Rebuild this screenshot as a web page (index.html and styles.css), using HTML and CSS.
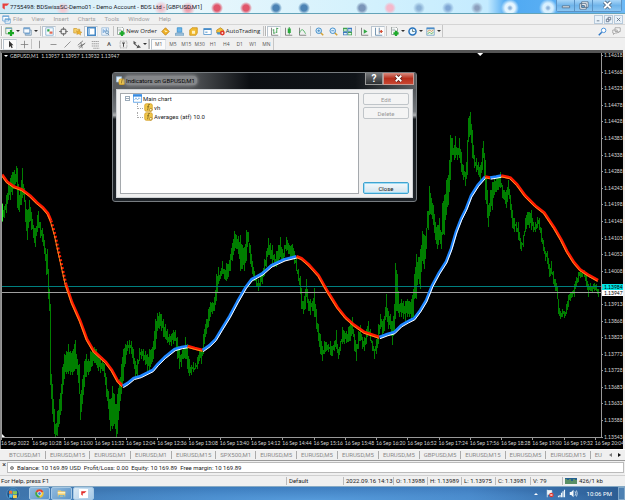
FILE: index.html
```html
<!DOCTYPE html>
<html lang="en">
<head>
<meta charset="utf-8">
<title>7755498: BDSwissSC-Demo01 - Demo Account - BDS Ltd - [GBPUSD,M1]</title>
<link rel="stylesheet" href="styles.css">
</head>
<body>
<svg class="defs" aria-hidden="true">
  <symbol id="i-logo" viewBox="0 0 12 12"><path d="M2 2h9L8 5H5v5L2 8z" fill="#e8413c"/></symbol>
  <symbol id="i-mdi" viewBox="0 0 12 12"><path d="M1 1h8v7H1zM4 5h7v6H4z" fill="#fff" stroke="#5c9cd0"/><path d="M1 2h8M4 6h7" stroke="#5c9cd0"/></symbol>
  <symbol id="i-new" viewBox="0 0 12 12"><path d="M1 1h8v8H1z" fill="#eef4ee" stroke="#689b70"/><path d="M1 2h8" stroke="#5d93c8"/><path d="M8 4v8M4 8h8" stroke="#18a522" stroke-width="3"/></symbol>
  <symbol id="i-prof" viewBox="0 0 12 12"><path d="M3 4h8v7H3z" fill="#dfe9f2" stroke="#708ca6"/><path d="M1 1h8v7H1z" fill="#f5faff" stroke="#5b8bb9"/><path d="M1 2h8M3 9h6" stroke="#74a4d0" stroke-width="2"/></symbol>
  <symbol id="i-market" viewBox="0 0 12 12"><path d="M1 1h10v10H1z" fill="#f4faff" stroke="#79a7ca"/><path d="M3 3h3v3H3z" fill="#29a545"/><path d="M6 6h4v3H6z" fill="#e56b55"/></symbol>
  <symbol id="i-target" viewBox="0 0 12 12"><circle cx="6" cy="6" r="3.5" fill="none" stroke="#777" stroke-width="1.5"/><path d="M6 0v4M6 8v4M0 6h4M8 6h4" stroke="#666"/></symbol>
  <symbol id="i-nav" viewBox="0 0 12 12"><path d="M1 2h4l1 1h3v5H1z" fill="#f7d06a" stroke="#ce9d35"/><path d="M8 4l1 2 3 1-2 1v3L8 9l-3 1 1-3-2-2 3 1z" fill="#f0b62e" stroke="#bd8429" stroke-width=".5"/></symbol>
  <symbol id="i-term" viewBox="0 0 12 12"><path d="M1 1h10v10H1z" fill="#fff" stroke="#4789c6" stroke-width="2"/><path d="M2 2h2v8H2z" fill="#90bce3"/></symbol>
  <symbol id="i-tester" viewBox="0 0 12 12"><path d="M1 1h9v10H1z" fill="#eaf3fc" stroke="#9ab9d5"/><path d="M3 8V3m2 4V4m2 3V2" stroke="#498acb"/><circle cx="8" cy="7" r="2" fill="#cce5f7" stroke="#638bb0"/><path d="M9 9l2 2" stroke="#6b7f92"/></symbol>
  <symbol id="i-order" viewBox="0 0 12 12"><path d="M2 0h6l2 2v8H2z" fill="#fff" stroke="#8a9390"/><path d="M3 3h4M3 5h5" stroke="#9aa"/><path d="M8 5v7M4.500 8.500h7" stroke="#1eaa2b" stroke-width="3"/></symbol>
  <symbol id="i-gold" viewBox="0 0 12 12"><path d="M6 1l5 5-5 5-5-5z" fill="#eeb027" stroke="#b87912"/><path d="M4 4l5 2-3 1z" fill="#fff0b4"/></symbol>
  <symbol id="i-expert" viewBox="0 0 12 12"><path d="M3 1h6v6H3z" fill="#6db5ea" stroke="#318bca"/><path d="M1 8h10l1 3H0z" fill="#a4c5df" stroke="#6c9cbf"/></symbol>
  <symbol id="i-lock" viewBox="0 0 12 12"><path d="M1 4l3-3h7v7l-2 3H1z" fill="#f1bb33" stroke="#c88c12"/><path d="M4 5h4v4H4z" fill="#fff1c2"/></symbol>
  <symbol id="i-win" viewBox="0 0 12 12"><path d="M1 2h10v8H1z" fill="#fff" stroke="#468bc8"/><path d="M1 3h10" stroke="#468bc8" stroke-width="2"/><path d="M3 6h3v2H3z" fill="#8ab9df"/></symbol>
  <symbol id="i-auto" viewBox="0 0 12 12"><path d="M1 4l5-3 4 3v4H1z" fill="#f1bf36" stroke="#b98720"/><path d="M1 7h7v3H2z" fill="#4d94cb"/><circle cx="8.500" cy="8" r="3.200" fill="#df3527"/><path d="M7.500 7h2v2h-2z" fill="#fff"/></symbol>
  <symbol id="i-bars" viewBox="0 0 12 12"><path d="M2 1v10h9" fill="none" stroke="#666"/><path d="M5 3v6M3.500 4H5M5 8h2M9 1v7M9 2h2M7.500 7H9" stroke="#27933a" fill="none"/></symbol>
  <symbol id="i-candle" viewBox="0 0 12 12"><path d="M2 1v10h9" fill="none" stroke="#666"/><path d="M7 0v10" stroke="#15842a"/><path d="M5 2h4v6H5z" fill="#28aa3b"/></symbol>
  <symbol id="i-line" viewBox="0 0 12 12"><path d="M2 1v10h9" fill="none" stroke="#666"/><path d="M2 8c3-7 5-5 8 1" fill="none" stroke="#31a745"/></symbol>
  <symbol id="i-zin" viewBox="0 0 12 12"><path d="M7 7l4 4" stroke="#d5a132" stroke-width="2"/><circle cx="5" cy="5" r="3.700" fill="#def1ff" stroke="#458fca" stroke-width="1.300"/><path d="M5 3v4M3 5h4" stroke="#347cb6"/></symbol>
  <symbol id="i-zout" viewBox="0 0 12 12"><path d="M7 7l4 4" stroke="#d5a132" stroke-width="2"/><circle cx="5" cy="5" r="3.700" fill="#def1ff" stroke="#458fca" stroke-width="1.300"/><path d="M3 5h4" stroke="#347cb6"/></symbol>
  <symbol id="i-tile" viewBox="0 0 12 12"><path d="M0 1h6v5H0zM6 6h6v5H6z" fill="#3fa24c"/><path d="M6 1h6v5H6zM0 6h6v5H0z" fill="#3c79c2"/><path d="M1 3h4v2H1zm6 0h4v2H7zM1 8h4v2H1zm6 0h4v2H7z" fill="#e9f5ee"/></symbol>
  <symbol id="i-scroll" viewBox="0 0 12 12"><path d="M2 1v10h9" fill="none" stroke="#666"/><path d="M5 3l5 3-5 3z" fill="#33a843"/></symbol>
  <symbol id="i-shift" viewBox="0 0 12 12"><path d="M2 1v10h9M7 1v8" fill="none" stroke="#4d789d"/><path d="M8 6h4M8 6l2-2v4z" stroke="#d14a30" fill="#d14a30"/></symbol>
  <symbol id="i-clock" viewBox="0 0 12 12"><circle cx="6" cy="6" r="4.700" fill="#e9f6ff" stroke="#2773bd" stroke-width="2"/><path d="M6 3v3h3" fill="none" stroke="#466"/></symbol>
  <symbol id="i-templ" viewBox="0 0 12 12"><path d="M1 1h10v10H1z" fill="#eef6e8" stroke="#6e9cc4"/><path d="M1 2h10" stroke="#4b8ccc" stroke-width="2"/><path d="M2 6l3-2 2 2 3-2" fill="none" stroke="#d07b45"/><path d="M2 9l3-2 2 2 3-2" fill="none" stroke="#42a154"/></symbol>
  <symbol id="i-search" viewBox="0 0 12 12"><path d="M5 7l-4 4" stroke="#2e76c4" stroke-width="2"/><circle cx="7.500" cy="4.500" r="3" fill="#fff" stroke="#4d93da" stroke-width="1.300"/></symbol>
  <symbol id="i-chat" viewBox="0 0 12 12"><path d="M4 1h7v5h-2v2L7 6H4zM1 4h6v4H4l-2 2V8H1z" fill="#f5f5f5" stroke="#999"/></symbol>
  <symbol id="i-cursor" viewBox="0 0 12 12"><path d="M4 1v9l2-2 1.500 3 1.500-1-1.500-3H10z" fill="#333"/></symbol>
  <symbol id="i-cross" viewBox="0 0 12 12"><path d="M6 1v10M1 6h10" stroke="#777"/></symbol>
  <symbol id="i-v" viewBox="0 0 12 12"><path d="M6 1v10" stroke="#777"/></symbol>
  <symbol id="i-h" viewBox="0 0 12 12"><path d="M2 6h8" stroke="#777"/></symbol>
  <symbol id="i-t" viewBox="0 0 12 12"><path d="M2 10l8-8" stroke="#777"/></symbol>
  <symbol id="i-chan" viewBox="0 0 12 12"><path d="M1 7l7-6M3 11l8-7M2 9l8-4M5 3l2 8" stroke="#666"/></symbol>
  <symbol id="i-fibo" viewBox="0 0 12 12"><path d="M1 2h10M1 5h10M1 8h10M3 11h8" stroke="#888" stroke-dasharray="2 .5"/></symbol>
  <symbol id="i-txt" viewBox="0 0 12 12"><path d="M1.500 1.500h9v9h-9z" fill="none" stroke="#888" stroke-dasharray="1 1"/><path d="M4 4h4M6 4v5" stroke="#444" stroke-width="1.300"/></symbol>
  <symbol id="i-arr" viewBox="0 0 12 12"><path d="M2 5V1l4 3-2 1 4 3V6l4 4-6 1 1-2z" fill="#555"/></symbol>
  <symbol id="i-fx" viewBox="0 0 12 12"><rect x="1" y="1" width="10" height="10" rx="2" fill="#f1c74b" stroke="#d19b1d"/><path d="M8 2H6L5 9H4M4 5h3" fill="none" stroke="#7f6721"/><circle cx="9" cy="9" r="1.800" fill="#fff3bd" stroke="#a57921"/></symbol>
  <symbol id="i-dlg" viewBox="0 0 12 12"><path d="M.5 1h7v7h-7z" fill="#e7f2fb" stroke="#8fb6d8"/><rect x="4" y="4" width="7.500" height="7.500" rx="2" fill="#f1c74b" stroke="#d19b1d"/><path d="M9 5H8L7 10" fill="none" stroke="#7f6721"/></symbol>
  <symbol id="i-chart" viewBox="0 0 12 12"><path d="M.5 1h11v10H.5z" fill="#fff" stroke="#378be0"/><path d="M0 2h12" stroke="#378be0" stroke-width="3"/><path d="M2 8l2-3 2 3 2-3 2 2" fill="none" stroke="#79aede"/></symbol>
  <symbol id="i-orb" viewBox="0 0 18 18"><circle cx="9" cy="9" r="8" fill="#174d82" stroke="#65a0ce"/><circle cx="9" cy="7" r="5.500" fill="#3e86bd"/><path d="M4 5q2-1 4 0v4q-2-1-4 0z" fill="#f37733"/><path d="M9 5q2 1 5 0v4q-3 1-5 0z" fill="#8acb4e"/><path d="M4 10q2-1 4 0v4q-2-1-4 0z" fill="#54b7f1"/><path d="M9 10q2 1 5 0v4q-3 1-5 0z" fill="#f8d14a"/></symbol>
  <symbol id="i-chrome" viewBox="0 0 12 12"><circle cx="6" cy="6" r="5.500" fill="#f3c52f"/><path d="M6 6L1 3.500a5.500 5.500 0 0 1 10 0z" fill="#e34234"/><path d="M6 6L1 3.500A5.500 5.500 0 0 0 6 11.500z" fill="#35a853"/><circle cx="6" cy="6" r="2.500" fill="#3b7fe0" stroke="#fff"/></symbol>
  <symbol id="i-folder" viewBox="0 0 12 12"><path d="M1 2h4l1 1h5v7H1z" fill="#f1cc70"/><path d="M1 4h10v2H1z" fill="#fff2be"/><path d="M2 8h8v3H8V9H4v2H2z" fill="#65b0dc"/></symbol>
  <symbol id="i-mt" viewBox="0 0 12 12"><path d="M0 0h12v12H0z" fill="#fff"/><path d="M3 3h7L7 5.500H5V9L3 7.500z" fill="#e22f2c"/></symbol>
  <symbol id="i-flag" viewBox="0 0 12 12"><path d="M3 1v10M3 2h6v5H3" fill="#eef5fa" stroke="#eef5fa"/><circle cx="8.500" cy="8" r="3" fill="#df3229"/><path d="M7 6.500l3 3m0-3l-3 3" stroke="#fff"/></symbol>
  <symbol id="i-net" viewBox="0 0 12 12"><path d="M2 11V9m2 2V8m2 3V5m2 6V3m2 8V1" stroke="#edf5fb" stroke-width="1.500"/></symbol>
  <symbol id="i-vol" viewBox="0 0 12 12"><path d="M1 4h2l3-3v10L3 8H1z" fill="#f1f7fb"/><path d="M8 3q2 3 0 6M10 2q2 4 0 8" fill="none" stroke="#e8f2f9"/></symbol>
</svg>

<header class="titlebar">
  <svg class="ico"><use href="#i-logo"/></svg>
  <h1>7755498: BDSwissSC-Demo01 - Demo Account - BDS Ltd - [GBPUSD,M1]</h1>
  <div class="caption">
    <button aria-label="Minimize"><svg viewBox="0 0 18 12"><path d="M5.500 6.500h8v2h-8z" fill="#fff" stroke="#58718a"/></svg></button>
    <button aria-label="Restore"><svg viewBox="0 0 18 12"><path d="M7 2h7v6H7zM5 4h7v6H5z" fill="#fff" stroke="#58718a"/><path d="M7 6h3v2H7z" fill="#6db4e8" stroke="#58718a"/></svg></button>
    <button class="wide" aria-label="Close"><svg viewBox="0 0 28 12"><path d="M11 2l7 7m0-7l-7 7" stroke="#58718a" stroke-width="4"/><path d="M11 2l7 7m0-7l-7 7" stroke="#fff" stroke-width="2"/></svg></button>
  </div>
</header>

<nav class="menubar">
  <svg class="ico"><use href="#i-mdi"/></svg>
  <a href="#">File</a><a href="#">View</a><a href="#">Insert</a><a href="#">Charts</a><a href="#">Tools</a><a href="#">Window</a><a href="#">Help</a>
  <div class="mdi">
    <button aria-label="Minimize chart"><svg viewBox="0 0 8 8"><path d="M2 5.500h3" stroke="#678"/></svg></button>
    <button aria-label="Restore chart"><svg viewBox="0 0 8 8"><path d="M3.500 1.500h3v3h-3zM1.500 3.500h3v3h-3z" fill="#eef" stroke="#678"/></svg></button>
    <button aria-label="Close chart"><svg viewBox="0 0 8 8"><path d="M2 2l4 4m0-4l-4 4" stroke="#678"/></svg></button>
  </div>
</nav>

<div class="toolbar first">
  <div class="strip">
    <i class="grip"></i>
    <button class="drop" aria-label="New chart"><svg class="ico"><use href="#i-new"/></svg></button>
    <button class="drop" aria-label="Profiles"><svg class="ico"><use href="#i-prof"/></svg></button>
    <i class="sep"></i>
    <button class="on" aria-label="Market Watch"><svg class="ico"><use href="#i-market"/></svg></button>
    <button aria-label="Data Window"><svg class="ico"><use href="#i-target"/></svg></button>
    <button aria-label="Navigator"><svg class="ico"><use href="#i-nav"/></svg></button>
    <button class="on" aria-label="Terminal"><svg class="ico"><use href="#i-term"/></svg></button>
    <button aria-label="Strategy Tester"><svg class="ico"><use href="#i-tester"/></svg></button>
    <i class="sep"></i>
    <button class="label"><svg class="ico"><use href="#i-order"/></svg>New Order</button>
    <button aria-label="MetaEditor"><svg class="ico"><use href="#i-gold"/></svg></button>
    <button aria-label="Virtual hosting"><svg class="ico"><use href="#i-expert"/></svg></button>
    <button aria-label="Market"><svg class="ico"><use href="#i-lock"/></svg></button>
    <button aria-label="Full screen"><svg class="ico"><use href="#i-win"/></svg></button>
    <button class="label auto"><svg class="ico"><use href="#i-auto"/></svg>AutoTrading</button>
    <i class="sep"></i><i class="grip"></i>
    <button class="on" aria-label="Bar chart"><svg class="ico"><use href="#i-bars"/></svg></button>
    <button aria-label="Candlesticks"><svg class="ico"><use href="#i-candle"/></svg></button>
    <button aria-label="Line chart"><svg class="ico"><use href="#i-line"/></svg></button>
    <i class="sep"></i>
    <button aria-label="Zoom in"><svg class="ico"><use href="#i-zin"/></svg></button>
    <button aria-label="Zoom out"><svg class="ico"><use href="#i-zout"/></svg></button>
    <button aria-label="Tile windows"><svg class="ico"><use href="#i-tile"/></svg></button>
    <i class="sep"></i>
    <button aria-label="Auto scroll"><svg class="ico"><use href="#i-scroll"/></svg></button>
    <button class="on" aria-label="Chart shift"><svg class="ico"><use href="#i-shift"/></svg></button>
    <i class="sep"></i>
    <button class="drop" aria-label="Indicators"><svg class="ico"><use href="#i-order"/></svg></button>
    <button class="drop" aria-label="Periods"><svg class="ico"><use href="#i-clock"/></svg></button>
    <button class="drop" aria-label="Templates"><svg class="ico"><use href="#i-templ"/></svg></button>
  </div>
  <div class="right">
    <button aria-label="Search"><svg class="ico"><use href="#i-search"/></svg></button>
    <button aria-label="Messages"><svg class="ico"><use href="#i-chat"/></svg></button>
  </div>
</div>

<div class="toolbar second">
  <div class="strip">
    <i class="grip"></i>
    <button class="on" aria-label="Cursor"><svg class="ico"><use href="#i-cursor"/></svg></button>
    <button aria-label="Crosshair"><svg class="ico"><use href="#i-cross"/></svg></button>
    <i class="sep"></i>
    <button aria-label="Vertical line"><svg class="ico"><use href="#i-v"/></svg></button>
    <button aria-label="Horizontal line"><svg class="ico"><use href="#i-h"/></svg></button>
    <button aria-label="Trendline"><svg class="ico"><use href="#i-t"/></svg></button>
    <button aria-label="Channel"><svg class="ico"><use href="#i-chan"/></svg></button>
    <button aria-label="Fibonacci"><svg class="ico"><use href="#i-fibo"/></svg></button>
    <button class="letter">A</button>
    <button aria-label="Text label"><svg class="ico"><use href="#i-txt"/></svg></button>
    <button class="drop" aria-label="Arrows"><svg class="ico"><use href="#i-arr"/></svg></button>
    <i class="sep"></i><i class="grip"></i>
    <div class="periods">
      <button class="on">M1</button><button>M5</button><button>M15</button><button>M30</button><button>H1</button><button>H4</button><button>D1</button><button>W1</button><button>MN</button>
    </div>
  </div>
</div>

<main class="chart">
  <div class="plot">
    <svg id="plot" viewBox="2 53 600 385" preserveAspectRatio="none" role="img" aria-label="GBPUSD one minute price chart">
      <path id="bars" fill="none" stroke="#008000" stroke-width="1" shape-rendering="crispEdges"/>
      <path d="M2.500 204v18" stroke="#3cff3c"/>
      <path d="M2 287.500h600" stroke="#008080" shape-rendering="crispEdges"/>
      <path d="M2 293.500h600" stroke="#a0a0a0" shape-rendering="crispEdges"/>
      <g id="averages" fill="none" stroke-linejoin="round"></g>
      <path d="M478 53h6l-3 3z" fill="#fff"/>
      <path d="M2 435v3h3z" fill="#fff"/>
    </svg>
    <p class="quote"><i class="tri"></i>GBPUSD,M1&nbsp; 1.13957 1.13957 1.13932 1.13947</p>
  </div>
  <ol class="prices">
    <li>1.14618</li><li>1.14568</li><li>1.14523</li><li>1.14478</li><li>1.14428</li><li>1.14383</li><li>1.14338</li><li>1.14288</li><li>1.14243</li><li>1.14198</li><li>1.14148</li><li>1.14103</li><li>1.14053</li><li>1.14008</li><li class="now"><b class="line">1.13984</b><b class="bid">1.13947</b></li><li>1.13913</li><li>1.13868</li><li>1.13823</li><li>1.13773</li><li>1.13728</li><li>1.13683</li><li>1.13633</li><li>1.13588</li><li>1.13543</li>
  </ol>
  <ol class="times">
    <li>16 Sep 2022</li><li>16 Sep 10:28</li><li>16 Sep 11:00</li><li>16 Sep 11:32</li><li>16 Sep 12:04</li><li>16 Sep 12:36</li><li>16 Sep 13:08</li><li>16 Sep 13:40</li><li>16 Sep 14:12</li><li>16 Sep 14:44</li><li>16 Sep 15:16</li><li>16 Sep 15:48</li><li>16 Sep 16:20</li><li>16 Sep 16:52</li><li>16 Sep 17:24</li><li>16 Sep 17:56</li><li>16 Sep 18:28</li><li>16 Sep 19:00</li><li>16 Sep 19:32</li><li>16 Sep 20:04</li>
  </ol>

  <section class="dialog" role="dialog" aria-labelledby="dlg-title">
    <header>
      <svg class="ico"><use href="#i-dlg"/></svg>
      <h2 id="dlg-title">Indicators on GBPUSD,M1</h2>
      <button class="help">?</button>
      <button class="x" aria-label="Close dialog"><svg viewBox="0 0 30 12"><path d="M12 3l6 6m0-6l-6 6" stroke="#64211b" stroke-width="4"/><path d="M12 3l6 6m0-6l-6 6" stroke="#fff" stroke-width="2"/></svg></button>
    </header>
    <div class="client">
      <ul class="tree">
        <li class="root"><i class="box"></i><svg class="ico"><use href="#i-chart"/></svg>Main chart
          <ul>
            <li><svg class="ico"><use href="#i-fx"/></svg>vh</li>
            <li><svg class="ico"><use href="#i-fx"/></svg>Averages (atf) 10.0</li>
          </ul>
        </li>
      </ul>
      <div class="actions">
        <button disabled>Edit</button>
        <button disabled>Delete</button>
        <button class="close">Close</button>
      </div>
    </div>
  </section>
</main>

<nav class="tabs">
  <a href="#">BTCUSD,M1</a><a href="#">EURUSD,M15</a><a href="#">EURUSD,M1</a><a href="#">EURUSD,M1</a><a href="#">EURUSD,M15</a><a href="#">SPX500,M1</a><a href="#">EURUSD,M5</a><a href="#">EURUSD,M5</a><a href="#">EURUSD,M5</a><a href="#">EURUSD,M5</a><a href="#">GBPUSD,M5</a><a href="#">EURUSD,M15</a><a href="#">EURUSD,M5</a><a href="#">EURUSD,M15</a><a class="cut" href="#">EU</a>
  <div class="arrows"><button aria-label="Scroll tabs left" class="dim"></button><button aria-label="Scroll tabs right"></button></div>
</nav>

<section class="terminal">
  <button aria-label="Close terminal">×</button>
  <p><i class="dot"></i>Balance: 10 169.89 USD&nbsp; Profit/Loss: 0.00&nbsp; Equity: 10 169.89&nbsp; Free margin: 10 169.89</p>
</section>

<footer class="status">
  <span>For Help, press F1</span><span>Default</span><span>2022.09.16 14:13</span><span>O: 1.13988</span><span>H: 1.13989</span><span>L: 1.13975</span><span>C: 1.13981</span><span>V: 79</span>
  <span class="net"><svg viewBox="0 0 12 6"><path d="M0 0h12v6H0z" fill="#25608f"/><path d="M1 6V1m2 5V2m2 4V1m2 5V3m2 3V1m2 5V2" stroke="#8fbf3d"/></svg>426/1 kb</span>
</footer>

<div class="taskbar">
  <button class="start" aria-label="Start"><svg><use href="#i-orb"/></svg></button>
  <button class="task" aria-label="Chrome"><svg class="ico"><use href="#i-chrome"/></svg></button>
  <button class="task" aria-label="Explorer"><svg class="ico"><use href="#i-folder"/></svg></button>
  <button class="task active" aria-label="MetaTrader"><svg class="ico"><use href="#i-mt"/></svg></button>
  <div class="tray">
    <i class="up"></i>
    <svg class="ico"><use href="#i-flag"/></svg><svg class="ico"><use href="#i-net"/></svg><svg class="ico"><use href="#i-vol"/></svg>
    <time>10:06 PM</time>
    <button class="desk" aria-label="Show desktop"></button>
  </div>
</div>
<script src="chart.js"></script>
</body>
</html>
```

FILE: styles.css
```css
* { box-sizing: border-box; }
body {
  margin: 0;
  min-height: 100vh;
  display: flex;
  flex-direction: column;
  overflow-x: hidden;
  background: #f0f0f0;
  color: #222;
  font: 6px/8px Roboto, "Open Sans", sans-serif;
}
h1, h2, p, ol, ul { margin: 0; padding: 0; font-size: inherit; font-weight: normal; list-style: none; }
button { margin: 0; padding: 0; border: 0; background: none; color: inherit; font: inherit; }
a { color: inherit; text-decoration: none; }
.defs { position: absolute; width: 0; height: 0; }
.ico { width: 9px; height: 9px; flex: none; display: block; }

.titlebar {
  display: flex;
  align-items: center;
  height: 14px;
  padding-left: 1px;
  color: #16212b;
  border-bottom: 1px solid #63a3b8;
  background:
    radial-gradient(circle at 63px 9px, #f3c9d2 0 2px, transparent 7px),
    radial-gradient(circle at 161px 8px, #f0bcc8 0 2px, transparent 7px),
    radial-gradient(circle at 188px 9px, #ee9fad 0 2px, transparent 7px),
    radial-gradient(circle at 217px 8px, #e0566b 0 3px, transparent 6px),
    radial-gradient(circle at 246px 8px, #e0566b 0 3px, transparent 6px),
    radial-gradient(circle at 276px 8px, #4c83b4 0 3px, transparent 6px),
    radial-gradient(circle at 304px 8px, #4c83b4 0 3px, transparent 6px),
    radial-gradient(circle at 362px 8px, #7b95b8 0 3px, transparent 6px),
    radial-gradient(circle at 390px 8px, #f5b8cb 0 3px, transparent 6px),
    radial-gradient(circle at 419px 8px, #8ab0d4 0 2px, transparent 6px),
    radial-gradient(circle at 448px 8px, #7fa6d4 0 2px, transparent 6px),
    radial-gradient(circle at 477px 8px, #8c9fbd 0 2px, transparent 6px),
    radial-gradient(circle at 510px 8px, #8fb4da 0 1px, #e4f5ff 3px 5px, transparent 9px),
    radial-gradient(circle at 548px 8px, #8fb4da 0 1px, #d8f0ff 3px 5px, transparent 9px),
    linear-gradient(90deg, #cfeaf6, #e9f7fc 30%, #d2f1fd 60%, #c4ebff 78%, #4fa9f2 81%, #6bb8f5 100%);
}
.titlebar h1 { flex: 1; white-space: nowrap; }
.caption { display: flex; align-self: flex-start; margin-right: 3px; border: 1px solid #5b93c4; border-top: 0; border-radius: 0 0 3px 3px; }
.caption button { width: 18px; height: 11px; background: linear-gradient(#a9d6f8, #6fb4ea 50%, #8ac6f3); border-right: 1px solid #5b93c4; }
.caption .wide { width: 28px; border: 0; }
.caption svg { display: block; width: 100%; height: 100%; }

.menubar { display: flex; align-items: center; height: 10px; padding: 0 2px; color: #a0a0a0; }
.menubar .ico { margin-right: 2px; }
.menubar a { margin-right: 9px; }
.mdi { display: flex; gap: 1px; margin-left: auto; }
.mdi button { width: 9px; height: 9px; border: 1px solid #b7cadb; background: #e9f2fa; }
.mdi svg { display: block; width: 7px; height: 7px; }

.toolbar { display: flex; align-items: center; justify-content: space-between; height: 13px; border-top: 1px solid #d5d5d5; }
.toolbar button { display: flex; align-items: center; justify-content: center; width: 14px; height: 11px; }
.strip { display: flex; align-items: center; height: 12px; padding-left: 1px; border-right: 1px solid #c6c6c6; }
.toolbar .on { background: #fbfbfb; border: 1px solid #b9c4ce; border-right-color: #e0e4e8; border-bottom-color: #e0e4e8; }
.toolbar .drop { width: 18px; gap: 2px; }
.drop::after { content: ""; border: 2px solid transparent; border-top-color: #333; border-bottom: 0; }
.toolbar .label { width: 43px; gap: 1px; white-space: nowrap; color: #222; font-family: "Open Sans", sans-serif; }
.toolbar .auto { width: 48px; }
.sep { width: 1px; height: 10px; margin: 0 1px; background: #c4c4c4; }
.grip { width: 2px; height: 10px; border-left: 1px solid #b4b4b4; background: #fff; }
.second .sep { margin: 0; }
.right { display: flex; padding-right: 2px; }
.letter { font-weight: bold; color: #666; }
.periods { display: flex; width: 122px; font: 5px/8px "Open Sans", sans-serif; color: #555; }
.toolbar .periods button { flex: 1; }

.chart {
  position: relative;
  flex: 1;
  display: grid;
  grid-template: 1fr 11px / 1fr 21px;
  margin-right: 2px;
  border: solid #8a8a8a;
  border-width: 0 0 0 1px;
  border-top: 3px solid #555;
  background: #000;
  color: #d8d8d8;
  font: 5px/6px Lato, sans-serif;
}
.plot { position: relative; min-height: 0; border: 1px solid #999; border-top: 0; }
.plot svg { position: absolute; inset: 0; width: 100%; height: 100%; }
.quote { position: absolute; left: 2px; top: 0; display: flex; align-items: center; white-space: pre; }
.tri { margin-right: 2px; border: 2px solid transparent; border-top-color: #fff; border-bottom: 0; }
.prices { display: flex; flex-direction: column; justify-content: space-between; margin: -1px 0 -2px; }
.prices li { position: relative; height: 6px; padding-left: 2px; }
.prices li::before { content: ""; position: absolute; left: 0; top: 3px; width: 1px; height: 1px; background: #999; }
.prices .now { display: flex; flex-direction: column; padding: 0; }
.prices b { flex: none; padding-left: 2px; height: 6px; font-weight: normal; color: #000; }
.prices .line { background: #00e5e5; }
.prices .bid { background: #fff; }
.times { grid-column: 1 / -1; display: flex; justify-content: space-between; padding-top: 2px; }
.times li { position: relative; width: 28px; white-space: nowrap; }
.times li::before { content: ""; position: absolute; left: 0; top: -2px; width: 1px; height: 2px; background: #999; }

.dialog {
  position: absolute;
  left: 111px;
  top: 19px;
  width: 305px;
  padding: 0 3px 3px;
  border: 1px solid #777c80;
  border-radius: 3px;
  background: linear-gradient(#3a3e42, #74787c 30%, #b0b3b5 33%, #15191d 36%, #20252a);
  color: #1a1a1a;
  font: 6px/9px Roboto, sans-serif;
}
.dialog header { display: flex; align-items: flex-start; height: 16px; margin: 0 -3px; padding-left: 3px; background: linear-gradient(90deg, #5a5d60, #55585b 25%, #0b0e12 45%, #101419 80%, #5c5f62); }
.dialog header .ico { margin-top: 3px; }
.dialog h2 { margin: 3px auto 0 0; padding: 0 2px 0 1px; border-radius: 4px; background: #85878a; box-shadow: 0 0 3px 1px #85878a; color: #050505; }
.help { width: 18px; height: 12px; border: 1px solid #999; border-top: 0; background: linear-gradient(#77797b, #2d3033); color: #fff; font-weight: bold; font-size: 10px; }
.x { width: 31px; height: 12px; margin-right: 2px; border: 1px solid #c79a94; border-top: 0; background: linear-gradient(#d98c80, #b62f1d 50%, #cb4631); }
.x svg { display: block; width: 100%; height: 100%; }
.client { display: flex; gap: 4px; height: 109px; padding: 3px; background: #f0f0f0; border: 1px solid #cfd2d5; }
.tree { flex: 1; padding: 0 4px; border: 1px solid #a5a9ad; background: #fff; }
.tree li .ico { display: inline-block; vertical-align: top; margin-right: 1px; }
.box { display: inline-block; width: 5px; height: 5px; margin: 2px 3px 2px 0; border: 1px solid #9cabb9; background: linear-gradient(#9cabb9, #9cabb9) center / 3px 1px no-repeat #fff; vertical-align: top; }
.tree ul { margin-left: 12px; }
.tree ul li { display: flex; }
.tree ul li::before { content: ""; width: 5px; height: 5px; margin-right: 1px; border: 1px dotted #aaa; border-width: 0 0 1px 1px; }
.actions { display: flex; flex-direction: column; gap: 2px; width: 46px; }
.actions button { height: 12px; border: 1px solid #c0c5c9; border-radius: 2px; background: #f4f4f4; color: #999; }
.actions .close { margin-top: auto; border: 1px solid #3fa3d0; background: linear-gradient(#f2f8fb, #d3e4ee); box-shadow: inset 0 0 0 1px #9edcf5; color: #111; }

.tabs { display: flex; align-items: center; height: 11px; padding-left: 5px; overflow: hidden; color: #8a8a8a; border-top: 1px solid #fff; }
.tabs a { padding: 0 4px 0 4px; border-right: 1px solid #aaa; white-space: nowrap; }
.tabs .cut { flex: 1; border: 0; }
.arrows { display: flex; gap: 6px; padding-right: 4px; }
.arrows button { width: 3px; height: 4px; border: solid transparent; border-width: 2px 0 2px 3px; border-left-color: #111; }
.arrows .dim { border-width: 2px 3px 2px 0; border-right-color: #777; }

.terminal { display: flex; align-items: stretch; height: 15px; padding: 1px 1px 2px 1px; border-top: 1px solid #999; }
.terminal button { width: 6px; font-size: 7px; line-height: 6px; align-self: flex-start; }
.terminal p { flex: 1; display: flex; align-items: center; padding-left: 2px; border: 1px solid #bbb; background: #fff; white-space: pre; }
.dot { width: 4px; height: 4px; margin-right: 3px; border-radius: 50%; background: #aaa; border: 1px solid #888; }

.status { display: grid; grid-template-columns: 1fr 57px 50px 34px 34px 34px 35px 32px 63px; align-items: center; height: 11px; border-top: 1px solid #d0d0d0; }
.status span { padding-left: 2px; border-left: 1px solid #bbb; white-space: nowrap; }
.status span:first-child { padding-left: 1px; border: 0; }
.status .net { display: flex; align-items: center; gap: 2px; }
.net svg { width: 12px; height: 6px; }

.taskbar { display: flex; align-items: center; gap: 1px; height: 14px; border-top: 1px solid #86aac5; color: #fff; background: radial-gradient(ellipse at 50% 100%, #569bdb, transparent 70%), linear-gradient(90deg, #3f74aa, #3d7dbe 35%, #4280c2 75%, #2c5c92); }
.start { width: 28px; height: 14px; }
.start svg { display: block; width: 18px; height: 14px; margin: 0 4px; }
.task { display: flex; align-items: center; justify-content: center; width: 21px; height: 13px; border: 1px solid #a5c8e4; border-radius: 2px; background: linear-gradient(135deg, #91b9dc, #5a94ca); }
.task.active { background: linear-gradient(135deg, #dcebf6, #a4c8e6); }
.tray { display: flex; align-items: center; gap: 3px; margin-left: auto; }
.up { margin-right: 4px; border: 2px solid transparent; border-bottom-color: #fff; border-top: 0; }
.tray time { margin: 0 3px 0 6px; }
.desk { width: 7px; height: 13px; border: 1px solid #7fa6c8; background: #4d80b2; }
```

FILE: chart.js
```js
// Each sample is x, high, low.
const samples = `2,205,220 4,206,218 6,195,213 8,183,200 10,178,200 12,172,195 14,170,185 16,166,182 17,168,208 19,195,212 21,180,205 22,168,198 24,188,202 25,200,222 27,210,240 29,200,222 31,212,230 33,225,238 35,228,248 37,215,232 38,211,228 40,222,238 42,228,242 44,240,255 46,255,276 47,250,275 48,270,300 49,290,312 50,305,386 51,375,400 52,385,415 54,410,435 55,425,438 57,412,437 59,400,425 61,385,412 62,368,395 64,355,380 66,352,375 68,345,375 70,352,376 72,352,376 74,345,372 75,341,370 77,360,376 79,365,395 80,395,421 82,380,405 84,362,388 86,355,378 88,360,376 90,352,372 92,348,367 94,348,364 96,350,366 98,355,372 100,360,374 102,358,372 104,365,378 106,378,398 108,392,410 110,400,432 112,387,430 114,395,425 116,405,438 117,395,435 119,380,412 121,365,395 123,350,382 125,345,365 127,342,352 129,341,355 131,342,355 133,350,365 135,362,378 137,360,378 139,349,362 141,350,360 143,350,362 145,352,366 147,355,372 149,350,372 151,350,365 153,342,360 155,320,350 157,314,332 159,313,330 161,315,332 163,320,338 165,325,340 167,330,344 169,335,346 171,335,347 173,331,345 175,331,342 177,338,360 179,350,370 181,355,368 183,347,360 185,338,360 187,345,370 189,360,377 191,366,376 193,363,373 195,364,370 197,358,370 199,352,362 201,352,365 203,335,355 204,330,345 206,320,335 208,310,328 210,303,318 212,303,315 214,298,312 216,275,302 218,268,285 220,272,280 222,262,275 224,270,280 226,264,282 228,265,278 230,255,272 232,243,262 234,231,252 236,235,250 238,236,255 240,235,272 242,245,270 244,248,272 246,230,262 248,232,242 250,245,265 252,262,275 254,272,282 256,278,288 258,280,292 260,278,288 262,272,285 264,260,277 266,252,268 268,238,256 270,243,260 272,246,265 274,255,268 276,252,268 278,246,262 280,237,258 282,250,262 284,245,258 286,237,252 288,243,255 290,247,260 292,244,258 294,252,265 296,260,272 298,270,282 300,277,295 302,295,310 304,302,315 306,290,310 307,280,298 309,300,312 311,300,316 313,302,312 315,289,318 317,310,330 319,325,342 321,335,355 323,347,362 325,342,355 327,343,352 329,345,353 331,342,356 333,347,357 335,342,352 337,331,350 339,350,360 341,342,352 343,328,345 345,332,345 347,332,344 349,328,343 351,323,342 353,318,335 355,335,352 357,345,362 359,332,350 361,326,342 363,338,350 365,338,352 367,330,345 369,322,335 371,330,342 373,342,352 375,350,360 377,340,355 379,325,345 381,315,330 383,322,336 385,317,332 387,295,318 389,312,330 391,315,330 393,322,346 395,305,332 396,264,320 398,275,312 400,305,318 402,300,318 404,302,320 406,302,322 408,300,318 410,302,318 412,300,320 414,290,318 415,275,300 417,255,300 419,258,280 421,250,290 423,231,262 425,235,270 427,228,250 430,186,215 432,198,215 434,205,225 436,222,240 438,225,250 440,218,240 442,232,250 443,203,235 445,195,235 447,180,215 449,175,205 451,135,180 453,138,155 455,145,160 456,136,158 458,148,160 460,138,158 462,152,172 464,165,180 466,172,186 468,140,175 469,118,142 471,112,135 473,130,158 475,155,168 477,158,172 479,162,175 481,165,180 483,148,170 484,141,158 486,160,200 488,190,218 489,205,227 491,190,212 493,182,210 495,178,195 497,178,192 499,175,190 501,172,188 503,185,198 505,190,200 507,190,208 509,180,195 511,195,210 513,210,228 515,218,232 517,222,232 519,222,240 521,238,250 522,242,252 524,235,248 526,218,232 528,212,225 530,212,228 532,210,230 534,222,232 536,222,232 538,217,228 540,218,230 542,228,242 544,240,252 546,252,262 548,252,265 550,265,278 552,262,275 554,272,285 556,280,292 558,288,300 559,300,315 561,312,320 563,310,318 565,312,319 567,305,315 569,296,308 571,293,302 573,292,298 575,285,298 577,278,288 579,273,283 581,272,279 583,271,278 585,271,278 587,275,288 589,285,298 591,284,292 593,287,293 595,284,292 597,285,292 599,290,298`
  .split(" ").map(s => s.split(",").map(Number));

// Fill the one-pixel columns between samples, varying the wicks a little.
let d = "", seed = 7;
const jitter = n => { seed = (seed * 1103515245 + 12345) % 2147483648; return Math.round(seed / 2147483648 * n); };
samples.forEach(([x, hi, lo], i) => {
  d += `M${x + 0.5} ${hi}V${lo}`;
  const next = samples[i + 1];
  if (next) {
    for (let c = x + 1; c < next[0]; c++) {
      const h = Math.round((hi + next[1]) / 2) + jitter(6), l = Math.round((lo + next[2]) / 2) - jitter(6);
      d += `M${c + 0.5} ${Math.min(h, l - 2)}V${Math.max(l, h + 2)}`;
    }
  }
});
document.getElementById("bars").setAttribute("d", d);

const segments = [
  ["down", "2,175 7,182 14,187 22,190 30,196 37,203 43,208 48,214 51,221"],
  ["steep", "51,221 55,235 60,258 66,285"],
  ["down", "66,285 72,303 80,321 87,340 94,352 106,363 112,371 118,382 123,387"],
  ["up", "123,387 128,384 134,379 141,377 153,371 158,365 165,358 175,350 182,348 188,347"],
  ["down", "188,347 195,349 203,351"],
  ["up", "203,351 210,346 216,340 222,330 230,317 238,302 246,288 252,280 263,274 272,266 285,260 297,257"],
  ["down", "297,257 302,259 310,266 319,276 328,292 338,308 346,318 355,326 365,333 380,338"],
  ["up", "380,338 388,335 395,333 402,326 409,322 415,319 421,311 427,301 433,286 440,273 447,262 452,249 457,232 462,219 467,209 472,196 479,185 486,177"],
  ["down", "486,177 491,178"],
  ["up", "491,178 497,177 502,176"],
  ["down", "502,176 511,178 518,185 526,196 536,206 545,213 555,228 562,240 568,252 575,263 581,270 590,276 599,281"]
];
const colours = { down: ["#ff1a00", "#ff8a1a"], steep: ["#ff1a00", "#ff8a1a"], up: ["#1e86ff", "#ffffff"] };
const layer = document.getElementById("averages");
for (const [kind, points] of segments) {
  colours[kind].forEach((stroke, k) => {
    const line = document.createElementNS("http://www.w3.org/2000/svg", "polyline");
    line.setAttribute("points", points);
    line.setAttribute("stroke", stroke);
    line.setAttribute("stroke-width", k ? 1 : 3);
    if (!k && kind === "steep") line.setAttribute("stroke-dasharray", "2 2");
    if (k) line.setAttribute("transform", kind === "up" ? "translate(0.5 1.5)" : "translate(-0.5 1)");
    layer.append(line);
  });
}
```
